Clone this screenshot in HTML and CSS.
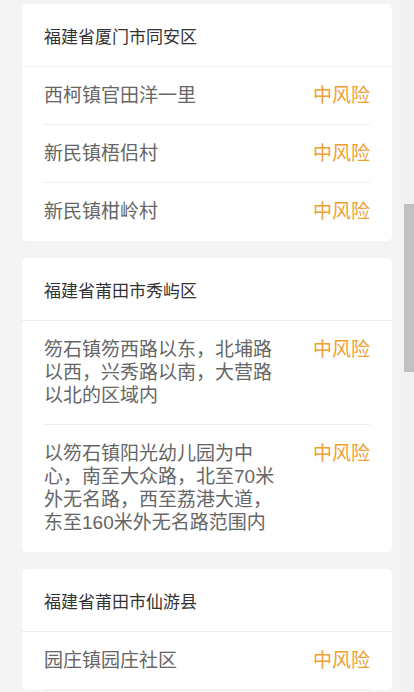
FILE: index.html
```html
<!DOCTYPE html>
<html lang="zh-CN">
<head>
  <meta charset="UTF-8">
  <meta name="viewport" content="width=device-width, initial-scale=1.0">
  <title>中风险地区</title>
  <link rel="stylesheet" href="styles.css">
</head>
<body>
  <div id="root">
    <div class="card">
      <div class="card-title">福建省厦门市同安区</div>
      <ul class="list">
        <li class="row"><span class="place">西柯镇官田洋一里</span><span class="risk">中风险</span></li>
        <li class="row"><span class="place">新民镇梧侣村</span><span class="risk">中风险</span></li>
        <li class="row"><span class="place">新民镇柑岭村</span><span class="risk">中风险</span></li>
      </ul>
    </div>
    <div class="card">
      <div class="card-title">福建省莆田市秀屿区</div>
      <ul class="list">
        <li class="row"><span class="place">笏石镇笏西路以东，北埔路以西，兴秀路以南，大营路以北的区域内</span><span class="risk">中风险</span></li>
        <li class="row"><span class="place">以笏石镇阳光幼儿园为中心，南至大众路，北至70米外无名路，西至荔港大道，东至160米外无名路范围内</span><span class="risk">中风险</span></li>
      </ul>
    </div>
    <div class="card">
      <div class="card-title">福建省莆田市仙游县</div>
      <ul class="list more">
        <li class="row"><span class="place">园庄镇园庄社区</span><span class="risk">中风险</span></li>
      </ul>
    </div>
  </div>
  <div class="scrollbar"><div class="thumb"></div></div>
</body>
</html>
```

FILE: styles.css
```css
*{
  margin: 0px;
  padding: 0px;
  box-sizing: border-box;
}
html, body{
  height: 100%;
  overflow: hidden;
}
body{
  background-color: #f4f4f4;
  font-family: "Liberation Sans", "Noto Sans CJK SC", sans-serif;
}
#root{
  padding: 4px 22px;
  display: flex;
  flex-direction: column;
  gap: 17px;
}
.card{
  background-color: #fff;
  border-radius: 5px;
}
.card-title{
  padding: 22px 22px 17px;
  font-size: 17px;
  line-height: 23px;
  color: #333;
  border-bottom: 1px solid #eee;
}
.list{
  list-style: none;
  padding: 0 22px;
}
.row{
  display: flex;
  align-items: flex-start;
  padding: 17px 0;
  font-size: 19px;
  line-height: 23px;
  border-bottom: 1px solid #eee;
}
.row:last-child{
  border-bottom: none;
  padding-bottom: 18px;
}
/* list continues below, keep the divider */
.more .row:last-child{
  border-bottom: 1px solid #eee;
  padding-bottom: 17px;
}
.place{
  flex: 1;
  color: #666;
}
.risk{
  margin-left: 30px;
  color: #f0a030;
  white-space: nowrap;
}
/* overlay scrollbar on the right edge */
.scrollbar{
  position: fixed;
  top: 0;
  right: 0;
  width: 13px;
  height: 100%;
  background-color: #f1f1f1;
}
.thumb{
  position: absolute;
  top: 204px;
  right: 0;
  width: 10px;
  height: 168px;
  background-color: #c1c1c1;
}
```
